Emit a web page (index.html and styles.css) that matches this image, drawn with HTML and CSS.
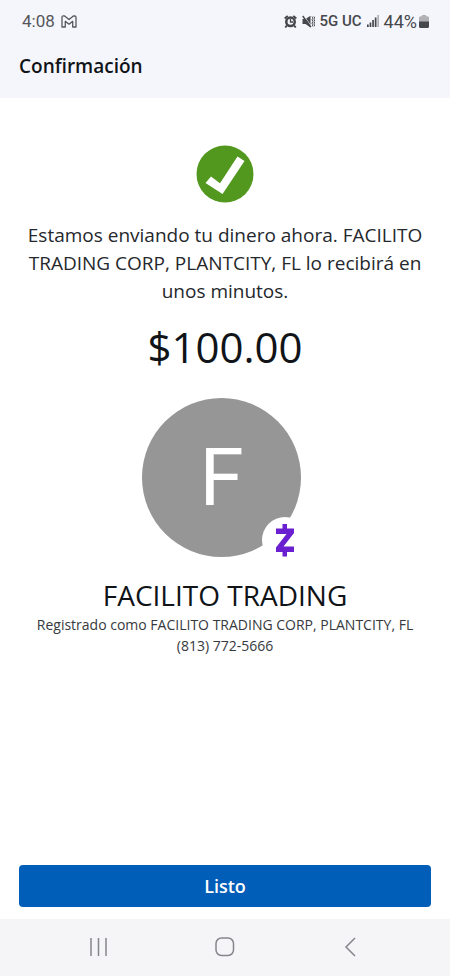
FILE: index.html
```html
<!DOCTYPE html>
<html lang="es">
<head>
<meta charset="utf-8">
<meta name="viewport" content="width=device-width, initial-scale=1">
<title>Confirmación</title>
<link rel="stylesheet" href="styles.css">
</head>
<body>
<div class="status-bar">
  <div class="status-group status-left">
    <span class="time">4:08</span>
    <svg width="16" height="13" viewBox="0 0 16 13" fill="none" stroke="currentColor" stroke-width="1.3" stroke-linejoin="round" aria-hidden="true"><path d="M1 2.2Q1 .8 2.400.8L3.600 1 8 4.600 12.400 1l1.200-.2Q15 .8 15 2.200V12h-3.300V6.300L8 9.200 4.300 6.300V12H1z"/></svg>
  </div>
  <div class="status-group status-right">
    <svg width="13" height="13" viewBox="0 0 13 13" aria-hidden="true"><circle cx="6.500" cy="6.800" r="5.500" fill="currentColor"/><path d="M.7 3.500L3.700.9M12.300 3.500L9.300.9M2.800 10.500L1.300 12.500M10.200 10.500l1.500 2" stroke="currentColor" stroke-width="1.900" fill="none"/><circle cx="6.500" cy="6.700" r="3" fill="#f5f6fb"/><path d="M6.500 4v3h2.500" stroke="currentColor" stroke-width="1.300" fill="none"/></svg>
    <svg width="13" height="13" viewBox="0 0 13 13" aria-hidden="true"><path d="M.5 4h3L8.500.8v11.700L3.500 9h-3z" fill="currentColor"/><path d="M1.800.5l8 11.500" stroke="#f5f6fb" stroke-width=".8"/><path d="M.7 1l8 11" stroke="currentColor" stroke-width="1.400"/><path d="M10 1.500l1 1.600-1 1.700 1 1.700-1 1.700 1 1.700-1 1.600M12 1.500l1 1.600-1 1.700 1 1.700-1 1.700 1 1.700-1 1.600" stroke="currentColor" fill="none"/></svg>
    <span class="network">5G UC</span>
    <svg width="12" height="12" viewBox="0 0 12 12" fill="currentColor" aria-hidden="true"><path d="M0 9.500h1.700V12H0zM2.600 7.500h1.700V12H2.600zM5.200 5h1.700v7H5.200zM7.800 2.500h1.700V12H7.800z"/><path d="M10.300 0H12v12h-1.700z" opacity=".4"/></svg>
    <span class="battery"><span class="battery-level">44%</span>
    <svg width="10" height="13" viewBox="0 0 10 13" aria-hidden="true"><path d="M3 0h4v1.300H8.500Q10 1.300 10 2.800V7H0V2.800Q0 1.300 1.500 1.300H3z" fill="#b0b0b5"/><path d="M0 6.500h10V11.500Q10 13 8.500 13h-7Q0 13 0 11.500z" fill="currentColor"/></svg></span>
  </div>
</div>
<header class="page-header"><h1>Confirmación</h1></header>
<main class="content">
  <svg width="58" height="58" viewBox="0 0 58 58" aria-hidden="true"><circle cx="29" cy="29" r="28.500" fill="#52981f"/><path d="M9.500 38L15 31.500 24 38.200 41.500 11.500 48.500 16 26.500 49z" fill="#fff"/></svg>
  <p class="message">Estamos enviando tu dinero ahora. FACILITO TRADING CORP, PLANTCITY, FL lo recibirá en unos minutos.</p>
  <p class="amount">$100.00</p>
  <div class="recipient-photo">
    <div class="avatar">F</div>
    <div class="badge">
      <svg width="20" height="34" viewBox="0 0 20 34" fill="#6a1fd0" aria-label="Zelle" role="img"><path d="M7.500 1h4.500v4.500H19v4.500L8.500 23.500H19v5.500h-7v4.500H7.500V29H1v-4.500L11.500 11H1V5.500h6.500z"/></svg>
    </div>
  </div>
  <h2 class="recipient">FACILITO TRADING</h2>
  <p class="detail">Registrado como FACILITO TRADING CORP, PLANTCITY, FL</p>
  <p class="detail">(813) 772-5666</p>
</main>
<footer class="actions"><button class="primary" type="button">Listo</button></footer>
<nav class="system-nav" aria-label="Sistema">
  <button type="button" aria-label="Recientes"><svg width="20" height="20" viewBox="0 0 20 20"><path d="M2 1v18M9.500 1v18M17 1v18"/></svg></button>
  <button type="button" aria-label="Inicio"><svg width="20" height="20" viewBox="0 0 20 20"><rect x="1" y="1" width="17.500" height="17.500" rx="5.500"/></svg></button>
  <button type="button" aria-label="Atrás"><svg width="20" height="20" viewBox="0 0 20 20"><path d="M14 1L5 10l9 9"/></svg></button>
</nav>
</body>
</html>
```
FILE: styles.css
```css
* { box-sizing: border-box; }

body {
  margin: 0;
  min-height: 100vh;
  display: flex;
  flex-direction: column;
  background: #fff;
  color: #101418;
  font-family: "Open Sans", "Noto Sans", sans-serif;
}

h1, h2, p { margin: 0; }
svg { display: block; flex: none; }

.status-bar {
  display: flex;
  justify-content: space-between;
  height: 42px;
  padding: 0 21px 0 22px;
  background: #f5f6fb;
  color: #55565b;
  font-family: Roboto, sans-serif;
  font-size: 17px;
}

.status-group { display: flex; align-items: center; }
.status-left { gap: 6px; }
.status-right { gap: 5px; color: #46474c; }
.network { font-size: 15px; font-weight: 500; }
.battery { display: flex; align-items: center; gap: 2px; }
.battery-level { font-size: 18px; }

.page-header {
  height: 56px;
  padding: 10px 19px;
  background: #f5f6fb;
}

.page-header h1 {
  font-size: 19px;
  line-height: 28px;
  font-weight: 600;
}

.content {
  flex: 1;
  display: flex;
  flex-direction: column;
  align-items: center;
  padding: 47px 19px 0;
  text-align: center;
}

.message {
  margin-top: 18px;
  color: #25282c;
  font-size: 19px;
  line-height: 28px;
}

.amount {
  margin-top: 14px;
  font-size: 42px;
  line-height: 56px;
}

.recipient-photo {
  position: relative;
  width: 166px;
  margin-top: 23px;
}

.avatar {
  display: flex;
  align-items: center;
  justify-content: center;
  width: 159px;
  height: 159px;
  border-radius: 50%;
  background: #969696;
  color: #fff;
  font-family: Roboto, sans-serif;
  font-size: 80px;
  line-height: 80px;
}

.badge {
  position: absolute;
  right: 0;
  bottom: -6px;
  display: flex;
  align-items: center;
  justify-content: center;
  width: 46px;
  height: 46px;
  border-radius: 50%;
  background: #fff;
}

.recipient {
  margin-top: 19px;
  font-size: 28px;
  line-height: 38px;
  font-weight: 400;
}

.detail {
  color: #36393d;
  font-size: 14px;
  line-height: 21px;
}

.actions { padding: 12px 19px; }

.primary {
  width: 100%;
  height: 42px;
  border: 0;
  border-radius: 4px;
  background: #005eb8;
  color: #fff;
  font: 600 18px/28px "Open Sans", "Noto Sans", sans-serif;
}

.system-nav {
  display: flex;
  justify-content: center;
  gap: 66px;
  height: 57px;
  padding-bottom: 2px;
  background: #f5f5f8;
}

.system-nav button {
  display: flex;
  align-items: center;
  justify-content: center;
  width: 60px;
  padding: 0;
  border: 0;
  background: none;
}

.system-nav svg {
  fill: none;
  stroke: #85868b;
  stroke-width: 1.5;
}
```
